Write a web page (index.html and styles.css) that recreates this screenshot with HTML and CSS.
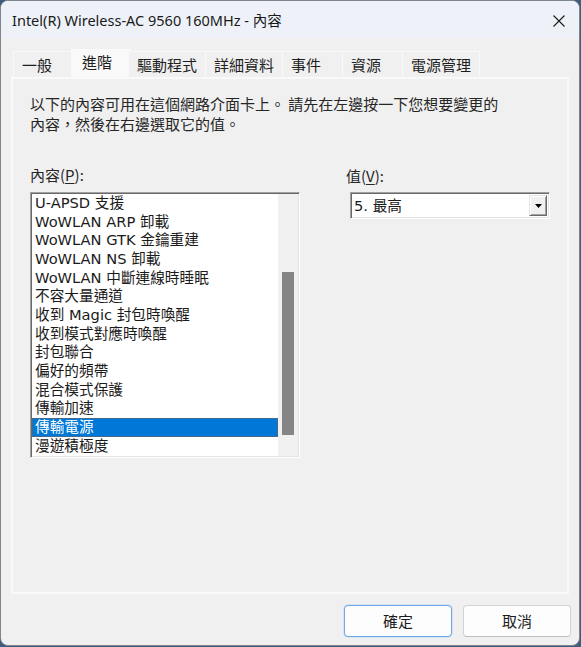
FILE: index.html
```html
<!DOCTYPE html>
<html lang="zh-Hant">
<head>
<meta charset="utf-8">
<title>內容</title>
<link rel="stylesheet" href="styles.css">
</head>
<body>
<div class="window">
  <div class="titlebar">
    <span class="title">Intel(R) Wireless-AC 9560 160MHz - 內容</span>
    <svg class="close" width="12" height="12" viewBox="0 0 12 12" aria-hidden="true">
      <path d="M0.5 0.5 L11.5 11.5 M11.5 0.5 L0.5 11.5" stroke="#1a1a1a" stroke-width="1.1" fill="none"/>
    </svg>
  </div>
  <div class="content">
    <div class="tabs">
      <div class="tab">一般</div>
      <div class="tab selected">進階</div>
      <div class="tab">驅動程式</div>
      <div class="tab">詳細資料</div>
      <div class="tab">事件</div>
      <div class="tab">資源</div>
      <div class="tab">電源管理</div>
    </div>
    <div class="panel">
      <p class="desc">以下的內容可用在這個網路介面卡上。 請先在左邊按一下您想要變更的<br>內容，然後在右邊選取它的值。</p>
      <div class="cols">
        <div class="col-left">
          <div class="label">內容(<u>P</u>):</div>
          <div class="listbox">
            <ul class="items">
              <li>U-APSD 支援</li>
              <li>WoWLAN ARP 卸載</li>
              <li>WoWLAN GTK 金鑰重建</li>
              <li>WoWLAN NS 卸載</li>
              <li>WoWLAN 中斷連線時睡眠</li>
              <li>不容大量通道</li>
              <li>收到 Magic 封包時喚醒</li>
              <li>收到模式對應時喚醒</li>
              <li>封包聯合</li>
              <li>偏好的頻帶</li>
              <li>混合模式保護</li>
              <li>傳輸加速</li>
              <li class="sel">傳輸電源</li>
              <li>漫遊積極度</li>
            </ul>
            <div class="scrollbar">
              <div class="thumb" style="margin-top:78px;height:163px"></div>
            </div>
          </div>
        </div>
        <div class="col-right">
          <div class="label vlabel">值(<u>V</u>):</div>
          <div class="combo">
            <span class="combo-text">5. 最高</span>
            <div class="drop">
              <svg width="7" height="4" viewBox="0 0 7 4" aria-hidden="true"><path d="M0 0 H7 L3.5 4 Z" fill="#000"/></svg>
            </div>
          </div>
        </div>
      </div>
    </div>
    <div class="footer">
      <button class="btn default">確定</button>
      <button class="btn">取消</button>
    </div>
  </div>
</div>
</body>
</html>
```
FILE: styles.css
```css
html, body {
  margin: 0;
  padding: 0;
}
body {
  background: #3c5d7e;
  width: 581px;
  height: 647px;
  overflow: hidden;
}
.window {
  width: 580px;
  height: 646px;
  box-sizing: border-box;
  border: 1px solid #7f858c;
  border-radius: 8px;
  overflow: hidden;
  background: #f0f0f0;
  display: flex;
  flex-direction: column;
  font-family: "Noto Sans CJK TC", "Noto Sans", sans-serif;
  color: #1b1b1b;
}
.titlebar {
  height: 37px;
  flex: none;
  background: #eef2f8;
  display: flex;
  align-items: center;
  justify-content: space-between;
  padding: 0 14px 0 11px;
}
.title {
  font-family: "Noto Sans", "Noto Sans CJK TC", sans-serif;
  font-size: 14.5px;
  line-height: 20px;
  color: #1a1a1a;
  margin-top: 1px;
}
.close {
  display: block;
  margin-top: 2px;
}
.content {
  flex: 1;
  display: flex;
  flex-direction: column;
  padding: 11px 10px 0 10px;
}
.tabs {
  display: flex;
  align-items: flex-end;
  height: 28px;
  padding-left: 2px;
  position: relative;
  z-index: 1;
}
.tab {
  box-sizing: border-box;
  height: 26px;
  min-width: 60px;
  padding: 0 8px;
  border: 1px solid #f9f9f9;
  border-bottom: none;
  background: #f0f0f0;
  font-size: 15px;
  line-height: 25px;
  color: #1e1e1e;
  white-space: nowrap;
}
.tab + .tab {
  border-left: none;
}
.tab.selected {
  height: 30px;
  margin: 0 -2px -2px;
  padding: 0 10px 4px;
  background: #f9f9f9;
  border: 1px solid #f9f9f9;
  border-bottom: none;
  line-height: 24px;
}
.panel {
  box-sizing: border-box;
  height: 517px;
  border: 2px solid #f9f9f9;
  padding: 15px 0 0 17px;
}
.desc {
  margin: 0;
  font-size: 15px;
  line-height: 20px;
  color: #262626;
}
.cols {
  display: flex;
  margin-top: 31px;
}
.col-left {
  width: 270px;
}
.col-right {
  margin-left: 46px;
}
.label {
  font-size: 15px;
  line-height: 20px;
  height: 20px;
  color: #262626;
}
.vlabel {
  margin-top: 1px;
  height: 19px;
}
.label u {
  text-decoration-thickness: 1px;
  text-underline-offset: 2px;
}
.listbox {
  margin-top: 7px;
  box-sizing: border-box;
  width: 270px;
  height: 266px;
  border: 1px solid;
  border-color: #a0a0a0 #ffffff #ffffff #a0a0a0;
  box-shadow: inset 1px 1px 0 #696969, inset -1px -1px 0 #e3e3e3;
  padding: 1px;
  background: #fff;
  display: flex;
}
.items {
  list-style: none;
  margin: 0;
  padding: 0;
  flex: 1;
  font-family: "DejaVu Sans", "Noto Sans CJK TC", sans-serif;
  font-size: 14.67px;
  color: #1b1b1b;
}
.items li {
  box-sizing: border-box;
  height: 18.67px;
  line-height: 18.67px;
  padding-left: 3px;
  white-space: nowrap;
}
.items li.sel {
  background: #0078d7;
  color: #fff;
  border: 1px solid #45698f;
  padding-left: 2px;
  line-height: 16.67px;
}
.scrollbar {
  width: 20px;
  background: #f0f0f0;
  display: flex;
  flex-direction: column;
  align-items: center;
}
.thumb {
  width: 12px;
  background: #858585;
}
.combo {
  margin-top: 7px;
  margin-left: 4px;
  box-sizing: border-box;
  width: 200px;
  height: 27px;
  border: 1px solid;
  border-color: #a0a0a0 #ffffff #ffffff #a0a0a0;
  box-shadow: inset 1px 1px 0 #696969, inset -1px -1px 0 #e3e3e3;
  padding: 2px 2px 2px 3px;
  background: #fff;
  display: flex;
  align-items: center;
  justify-content: space-between;
}
.combo-text {
  font-family: "DejaVu Sans", "Noto Sans CJK TC", sans-serif;
  font-size: 14.67px;
  line-height: 20px;
  color: #1b1b1b;
}
.drop {
  box-sizing: border-box;
  width: 18px;
  height: 21px;
  background: #f0f0f0;
  border: 1px solid;
  border-color: #e3e3e3 #696969 #696969 #e3e3e3;
  box-shadow: inset 1px 1px 0 #ffffff, inset -1px -1px 0 #a0a0a0;
  display: flex;
  align-items: center;
  justify-content: center;
}
.drop svg {
  display: block;
}
.footer {
  display: flex;
  justify-content: flex-end;
  gap: 11px;
  margin: 11px -2px 0 0;
}
.btn {
  box-sizing: border-box;
  width: 108px;
  height: 32px;
  border: 1px solid #d3d3d3;
  border-bottom-color: #bdbdbd;
  border-radius: 4px;
  background: #fdfdfd;
  font-family: "Noto Sans CJK TC", sans-serif;
  font-size: 15px;
  line-height: 20px;
  color: #1b1b1b;
  padding: 0;
}
.btn.default {
  border: 1px solid #6fa8e4;
  box-shadow: 0 0 0 0.5px #b9d6f4;
}
```
